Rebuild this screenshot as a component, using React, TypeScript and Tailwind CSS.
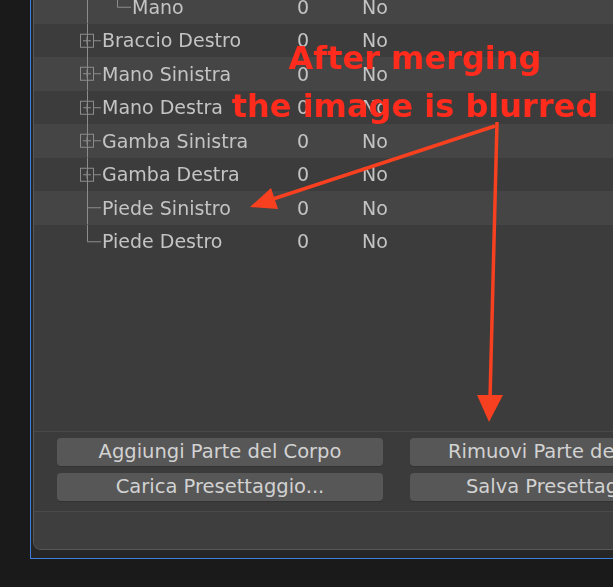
import React from 'react';

type Kind = 'nested' | 'plus' | 'leaf' | 'last';

const rows: { name: string; kind: Kind }[] = [
    { name: 'Mano', kind: 'nested' },
    { name: 'Braccio Destro', kind: 'plus' },
    { name: 'Mano Sinistra', kind: 'plus' },
    { name: 'Mano Destra', kind: 'plus' },
    { name: 'Gamba Sinistra', kind: 'plus' },
    { name: 'Gamba Destra', kind: 'plus' },
    { name: 'Piede Sinistro', kind: 'leaf' },
    { name: 'Piede Destro', kind: 'last' },
];

const H = 33.5;
const C = H / 2;
const LINE = '#8c8c8c';

function Gutter({ kind }: { kind: Kind }) {
    const w = kind === 'nested' ? 98 : 68;
    return (
        <svg width={w} height={H} viewBox={`0 0 ${w} ${H}`} className="shrink-0">
            <line x1={53.5} y1={0} x2={53.5} y2={kind === 'last' ? C : H} stroke={LINE} />
            {kind === 'plus' && (
                <>
                    <rect x={46.5} y={C - 6.5} width={13} height={13} fill="none" stroke={LINE} />
                    <line x1={49} y1={C} x2={57} y2={C} stroke={LINE} />
                    <line x1={53} y1={C - 4} x2={53} y2={C + 4} stroke={LINE} />
                    <line x1={60} y1={C} x2={67} y2={C} stroke={LINE} />
                </>
            )}
            {(kind === 'leaf' || kind === 'last') && <line x1={53.5} y1={C} x2={67} y2={C} stroke={LINE} />}
            {kind === 'nested' && (
                <>
                    <line x1={83.5} y1={0} x2={83.5} y2={C + 0.5} stroke={LINE} />
                    <line x1={83.5} y1={C + 0.5} x2={97} y2={C + 0.5} stroke={LINE} />
                </>
            )}
        </svg>
    );
}

const btn =
    'h-[28px] rounded-[4px] bg-[#575757] text-[19.5px] leading-none text-[#d2d2d2] shadow-[0_1px_0_#333] whitespace-nowrap';

export default function App() {
    return (
        <div className="relative w-[613px] h-[587px] overflow-hidden bg-[#1a1a1a] font-['DejaVu_Sans',sans-serif]">
            {/* window frame with selection outline */}
            <div className="ml-[30px] w-[760px] h-[559px] border-l border-b border-[#3b7fdc] bg-[#262626] pl-[2px] pb-[8px]">
                <div className="h-full flex flex-col bg-[#3c3c3c] border-l border-b border-[#575757] rounded-bl-[8px] overflow-hidden blur-[0.4px]">
                    <div className="flex-1 overflow-hidden">
                        <div className="-mt-[10px]">
                            {rows.map((r, i) => (
                                <div
                                    key={r.name}
                                    className={`flex items-center h-[33.5px] text-[19px] text-[#c4c4c4] ${i % 2 === 0 ? 'bg-[#454545]' : 'bg-[#3c3c3c]'}`}
                                >
                                    <div className="flex items-center w-[263px]">
                                        <Gutter kind={r.kind} />
                                        <span className="whitespace-nowrap">{r.name}</span>
                                    </div>
                                    <span className="w-[65px]">0</span>
                                    <span>No</span>
                                </div>
                            ))}
                        </div>
                    </div>

                    <div className="border-t border-[#484848] bg-[#3b3b3b] pl-[23px] pt-[6px] pb-[10px] flex flex-col gap-[7px]">
                        <div className="flex gap-[27px]">
                            <button className={`w-[326px] ${btn}`}>Aggiungi Parte del Corpo</button>
                            <button className={`w-[312px] ${btn}`}>Rimuovi Parte del Corpo</button>
                        </div>
                        <div className="flex gap-[27px]">
                            <button className={`w-[326px] ${btn}`}>Carica Presettaggio...</button>
                            <button className={`w-[312px] ${btn}`}>Salva Presettaggio...</button>
                        </div>
                    </div>

                    <div className="h-[38px] border-t border-[#4a4a4a] bg-[#3e3e3e]" />
                </div>
            </div>

            {/* annotation */}
            <div className="absolute left-[215px] top-[34px] w-[400px] text-center font-['DejaVu_Sans',sans-serif] font-bold text-[32px] leading-[48px] text-[#ff2b1c] pointer-events-none">
                <div>After merging</div>
                <div>the image is blurred</div>
            </div>
            <svg className="absolute inset-0 pointer-events-none" width={613} height={587}>
                <line x1={495} y1={126} x2={270} y2={200} stroke="#f7401f" strokeWidth={3.5} />
                <polygon points="250,207 278,209 271,188" fill="#f7401f" />
                <line x1={497} y1={122} x2={490} y2={400} stroke="#f7401f" strokeWidth={3.5} />
                <polygon points="489,422 477,395 503,395" fill="#f7401f" />
            </svg>
        </div>
    );
}
